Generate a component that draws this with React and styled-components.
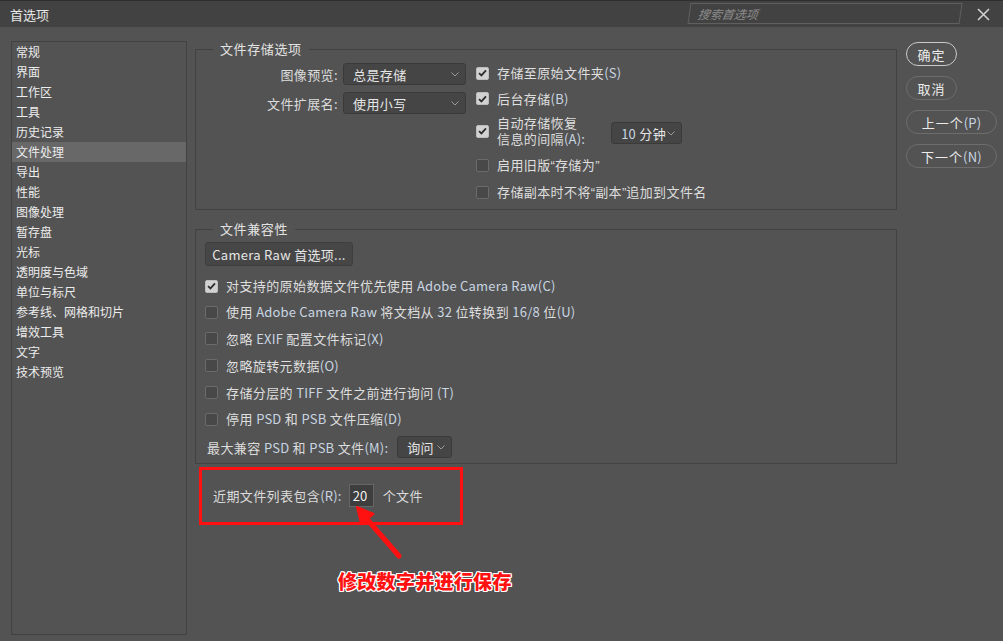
import React from "react";
import styled, { createGlobalStyle } from "styled-components";

const GlobalStyle = createGlobalStyle`
    html, body {
        margin: 0;
        padding: 0;
        background: #535353;
    }
    body {
        font-family: "Noto Sans CJK SC", "Liberation Sans", sans-serif;
        font-size: 13px;
        color: #dedede;
    }
`;

const Window = styled.div`
    position: relative;
    width: 1003px;
    height: 641px;
    background: #535353;
    overflow: hidden;
    display: flex;
    flex-direction: column;
`;

const TitleBar = styled.div`
    height: 27px;
    background: #424242;
    border-top: 1px solid #2e2e2e;
    box-sizing: border-box;
    display: flex;
    align-items: center;
    padding-left: 10px;
`;

const Title = styled.div`
    font-size: 13px;
    color: #e6e6e6;
    flex: 1;
`;

const SearchBox = styled.div`
    width: 272px;
    height: 21px;
    box-sizing: border-box;
    border: 1px solid #5f5f5f;
    display: flex;
    align-items: center;
    padding-left: 8px;
    font-size: 12px;
    font-style: italic;
    color: #8c8c8c;
    transform: skewX(-8deg);
    margin-bottom: 2px;
`;

const CloseBtn = styled.div`
    width: 40px;
    display: flex;
    justify-content: center;
    align-items: center;
    padding-left: 2px;
`;

const Body = styled.div`
    flex: 1;
    display: flex;
    padding: 14px 0 0 11px;
`;

const Sidebar = styled.div`
    width: 176px;
    height: 594px;
    box-sizing: border-box;
    border: 1px solid #424242;
`;

const NavItem = styled.div`
    height: 20px;
    line-height: 20px;
    padding-left: 4px;
    font-size: 12px;
    color: #ececec;
    background: ${(p) => (p.active ? "#686868" : "transparent")};
`;

const Main = styled.div`
    position: relative;
    width: 702px;
    margin-left: 8px;
    display: flex;
    flex-direction: column;
`;

const Group = styled.fieldset`
    margin: 0;
    padding: 0;
    border: 1px solid #424242;
    height: ${(p) => p.h}px;
    box-sizing: border-box;
    min-width: 0;
`;

const Legend = styled.legend`
    margin-left: 17px;
    padding: 0 7px;
    font-size: 13px;
    line-height: 16px;
    letter-spacing: 0.6px;
    color: #e2e2e2;
`;

const SaveLayout = styled.div`
    display: flex;
    padding-top: 3px;
`;

const LeftCol = styled.div`
    width: 270px;
    display: flex;
    flex-direction: column;
    gap: 7px;
    padding-top: 3px;
`;

const FieldRow = styled.div`
    display: flex;
    justify-content: flex-end;
    align-items: center;
    gap: 5px;
`;

const Label = styled.span`
    font-size: 13px;
    letter-spacing: 0.4px;
    color: #dcdcdc;
`;

const Select = styled.div`
    width: ${(p) => p.w}px;
    height: 22px;
    box-sizing: border-box;
    background: #454545;
    border: 1px solid #3a3a3a;
    border-radius: 3px;
    display: flex;
    align-items: center;
    justify-content: space-between;
    padding: 0 6px 0 9px;
    margin-left: ${(p) => p.ml || 0}px;
    margin-top: ${(p) => p.mt || 0}px;
    font-size: 13px;
    letter-spacing: 0.4px;
    color: #e6e6e6;
    flex: none;
`;

const RightCol = styled.div`
    margin-left: 10px;
    display: flex;
    flex-direction: column;
`;

const CheckRow = styled.div`
    height: ${(p) => p.h || 26}px;
    display: flex;
    align-items: center;
    gap: 8px;
`;

const Box = styled.span`
    width: 13px;
    height: 13px;
    flex: none;
    box-sizing: border-box;
    border-radius: 2px;
    background: ${(p) => (p.checked ? "#d2d2d2" : "#484848")};
    border: 1px solid ${(p) => (p.checked ? "#bdbdbd" : "#6b6b6b")};
    display: flex;
    align-items: center;
    justify-content: center;
`;

const CheckText = styled.span`
    font-size: 13px;
    letter-spacing: 0.4px;
    line-height: 16px;
    color: #dedede;
`;

const Latin = styled.span`
    color: #c9d6e2;
    letter-spacing: 0.2px;
`;

const Quote = styled.span`
    font-family: "Liberation Sans", sans-serif;
    letter-spacing: 0;
`;

const CompatBody = styled.div`
    padding: 5px 0 0 9px;
    display: flex;
    flex-direction: column;
`;

const PlainButton = styled.div`
    width: 148px;
    height: 24px;
    box-sizing: border-box;
    background: #464646;
    border: 1px solid #3e3e3e;
    border-radius: 3px;
    display: flex;
    align-items: center;
    justify-content: center;
    font-size: 13px;
    letter-spacing: 0.3px;
    color: #e6e6e6;
    margin-bottom: 7px;
`;

const SelectRow = styled.div`
    height: 30px;
    display: flex;
    align-items: center;
    gap: 9px;
    padding-left: 2px;
`;

const RecentRow = styled.div`
    display: flex;
    align-items: center;
    margin-top: 20px;
    padding-left: 18px;
    height: 23px;
`;

const NumInput = styled.div`
    width: 25px;
    height: 23px;
    box-sizing: border-box;
    margin: 0 9px 0 7px;
    background: #3e3e3e;
    border: 1px solid #666;
    font-size: 13px;
    color: #f0f0f0;
    display: flex;
    align-items: center;
    padding-left: 3px;
`;

const Actions = styled.div`
    margin-left: 9px;
    padding-top: 1px;
    display: flex;
    flex-direction: column;
    align-items: flex-start;
    gap: 10px;
`;

const PillButton = styled.div`
    height: 24px;
    width: ${(p) => p.w}px;
    box-sizing: border-box;
    border-radius: 12px;
    border: 1.5px solid ${(p) => (p.primary ? "#c9c9c9" : "#6d6d6d")};
    display: flex;
    align-items: center;
    justify-content: center;
    font-size: 13px;
    letter-spacing: 1px;
    color: #ececec;
`;

const RedFrame = styled.div`
    position: absolute;
    left: 4px;
    top: 426px;
    width: 264px;
    height: 58px;
    box-sizing: border-box;
    border: 3px solid #ff1111;
    pointer-events: none;
`;

const ArrowSvg = styled.svg`
    position: absolute;
    left: 150px;
    top: 462px;
    overflow: visible;
`;

const Note = styled.div`
    position: absolute;
    left: 143px;
    top: 526px;
    font-size: 19px;
    font-weight: 900;
    color: #ff1111;
    letter-spacing: 0.3px;
    text-shadow: 1px 0 0 #fff, -1px 0 0 #fff, 0 1px 0 #fff, 0 -1px 0 #fff,
        1px 1px 0 #fff, -1px -1px 0 #fff, 1px -1px 0 #fff, -1px 1px 0 #fff;
`;

function Tick() {
    return (
        <svg width="9" height="8" viewBox="0 0 9 8">
            <path d="M1 4.2 L3.4 6.4 L8 1.4" fill="none" stroke="#2d2d2d" strokeWidth="1.8" />
        </svg>
    );
}

function Chevron() {
    return (
        <svg width="8" height="5" viewBox="0 0 8 5">
            <path d="M0.5 0.5 L4 4 L7.5 0.5" fill="none" stroke="#9a9a9a" strokeWidth="1" />
        </svg>
    );
}

function Check(props) {
    return (
        <CheckRow h={props.h}>
            <Box checked={props.checked}>{props.checked && <Tick />}</Box>
            <CheckText>{props.children}</CheckText>
        </CheckRow>
    );
}

const navItems = [
    "常规",
    "界面",
    "工作区",
    "工具",
    "历史记录",
    "文件处理",
    "导出",
    "性能",
    "图像处理",
    "暂存盘",
    "光标",
    "透明度与色域",
    "单位与标尺",
    "参考线、网格和切片",
    "增效工具",
    "文字",
    "技术预览",
];

export default function App() {
    return (
        <Window>
            <GlobalStyle />
            <TitleBar>
                <Title>首选项</Title>
                <SearchBox>搜索首选项</SearchBox>
                <CloseBtn>
                    <svg width="13" height="13" viewBox="0 0 13 13">
                        <path d="M1 1 L12 12 M12 1 L1 12" stroke="#d0d0d0" strokeWidth="1.6" />
                    </svg>
                </CloseBtn>
            </TitleBar>
            <Body>
                <Sidebar>
                    {navItems.map((n) => (
                        <NavItem key={n} active={n === "文件处理"}>
                            {n}
                        </NavItem>
                    ))}
                </Sidebar>
                <Main>
                    <Group h={169}>
                        <Legend>文件存储选项</Legend>
                        <SaveLayout>
                            <LeftCol>
                                <FieldRow>
                                    <Label>图像预览:</Label>
                                    <Select w={123}>
                                        总是存储
                                        <Chevron />
                                    </Select>
                                </FieldRow>
                                <FieldRow>
                                    <Label>文件扩展名:</Label>
                                    <Select w={123}>
                                        使用小写
                                        <Chevron />
                                    </Select>
                                </FieldRow>
                            </LeftCol>
                            <RightCol>
                                <Check checked>
                                    存储至原始文件夹<Latin>(S)</Latin>
                                </Check>
                                <Check checked h={25}>
                                    后台存储<Latin>(B)</Latin>
                                </Check>
                                <CheckRow h={40}>
                                    <Box checked>
                                        <Tick />
                                    </Box>
                                    <CheckText>
                                        自动存储恢复
                                        <br />
                                        信息的间隔<Latin>(A):</Latin>
                                    </CheckText>
                                    <Select w={71} ml={18} mt={4}>
                                        <span>
                                            <Latin>10</Latin> 分钟
                                        </span>
                                        <Chevron />
                                    </Select>
                                </CheckRow>
                                <Check h={28}>
                                    启用旧版<Quote>“</Quote>存储为<Quote>”</Quote>
                                </Check>
                                <Check h={27}>
                                    存储副本时不将<Quote>“</Quote>副本<Quote>”</Quote>追加到文件名
                                </Check>
                            </RightCol>
                        </SaveLayout>
                    </Group>
                    <div style={{ height: 11 }} />
                    <Group h={243}>
                        <Legend>文件兼容性</Legend>
                        <CompatBody>
                            <PlainButton>Camera Raw 首选项...</PlainButton>
                            <Check checked>
                                对支持的原始数据文件优先使用 <Latin>Adobe Camera Raw(C)</Latin>
                            </Check>
                            <Check>
                                使用 <Latin>Adobe Camera Raw</Latin> 将文档从 <Latin>32</Latin> 位转换到{" "}
                                <Latin>16/8</Latin> 位<Latin>(U)</Latin>
                            </Check>
                            <Check h={27}>
                                忽略 <Latin>EXIF</Latin> 配置文件标记<Latin>(X)</Latin>
                            </Check>
                            <Check h={27}>
                                忽略旋转元数据<Latin>(O)</Latin>
                            </Check>
                            <Check h={27}>
                                存储分层的 <Latin>TIFF</Latin> 文件之前进行询问 <Latin>(T)</Latin>
                            </Check>
                            <Check>
                                停用 <Latin>PSD</Latin> 和 <Latin>PSB</Latin> 文件压缩<Latin>(D)</Latin>
                            </Check>
                            <SelectRow>
                                <Label>
                                    最大兼容 <Latin>PSD</Latin> 和 <Latin>PSB</Latin> 文件<Latin>(M):</Latin>
                                </Label>
                                <Select w={55}>
                                    询问
                                    <Chevron />
                                </Select>
                            </SelectRow>
                        </CompatBody>
                    </Group>
                    <RecentRow>
                        <Label>
                            近期文件列表包含<Latin>(R):</Latin>
                        </Label>
                        <NumInput>20</NumInput>
                        <Label>个文件</Label>
                    </RecentRow>
                    <RedFrame />
                    <ArrowSvg width="60" height="60" viewBox="0 0 60 60">
                        <path d="M54 53 L21 15" stroke="#ff1111" strokeWidth="5" strokeLinecap="round" />
                        <path
                            d="M12 4 L28.5 11 L16.3 21.4 Z"
                            fill="#ff1111"
                            stroke="#ff1111"
                            strokeWidth="2"
                            strokeLinejoin="round"
                        />
                    </ArrowSvg>
                    <Note>修改数字并进行保存</Note>
                </Main>
                <Actions>
                    <PillButton w={51} primary>
                        确定
                    </PillButton>
                    <PillButton w={51}>取消</PillButton>
                    <PillButton w={91}>
                        上一个<Latin>(P)</Latin>
                    </PillButton>
                    <PillButton w={91}>
                        下一个<Latin>(N)</Latin>
                    </PillButton>
                </Actions>
            </Body>
        </Window>
    );
}
